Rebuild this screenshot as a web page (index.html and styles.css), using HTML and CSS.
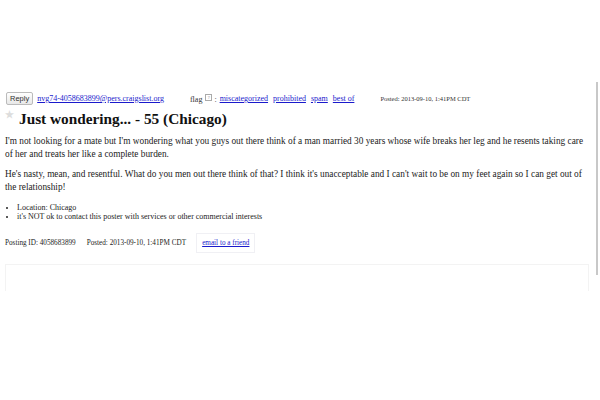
FILE: index.html
```html
<!DOCTYPE html>
<html>
<head>
<meta charset="utf-8">
<link rel="stylesheet" href="styles.css">
</head>
<body>
<div class="page">
  <div class="topbar">
    <span class="reply">Reply</span>
    <a class="email" href="#">nvg74-4058683899@pers.craigslist.org</a>
    <span class="flag">flag <span class="q">?</span> : </span>
    <a class="flink first" href="#">miscategorized</a>
    <a class="flink" href="#">prohibited</a>
    <a class="flink" href="#">spam</a>
    <a class="flink" href="#">best of</a>
    <span class="posted">Posted: 2013-09-10, 1:41PM CDT</span>
  </div>
  <h2 class="title"><span class="star">★</span>Just wondering... - 55 (Chicago)</h2>
  <div class="body">
    <p>I'm not looking for a mate but I'm wondering what you guys out there think of a man married 30 years whose wife breaks her leg and he resents taking care of her and treats her like a complete burden.</p>
    <p>He's nasty, mean, and resentful. What do you men out there think of that? I think it's unacceptable and I can't wait to be on my feet again so I can get out of the relationship!</p>
  </div>
  <ul class="notes">
    <li>Location: Chicago</li>
    <li>it's NOT ok to contact this poster with services or other commercial interests</li>
  </ul>
  <div class="footer">
    <span>Posting ID: 4058683899</span>
    <span class="fposted">Posted: 2013-09-10, 1:41PM CDT</span>
    <span class="friend"><a href="#">email to a friend</a></span>
  </div>
  <div class="box"></div>
</div>
<div class="scroll"></div>
</body>
</html>
```
FILE: styles.css
```css
html, body { margin: 0; padding: 0; background: #fff; }
body { font-family: "Liberation Serif", "Times New Roman", serif; color: #222; }
.page { padding: 92px 0 0 5px; width: 588px; }
.topbar { display: flex; align-items: center; font-size: 8px; height: 13px; }
.reply { font-family: "Liberation Sans", Arial, sans-serif; font-size: 7.5px; border: 1px solid #bbb; border-radius: 2px; background: linear-gradient(#fff, #e8e8e8); padding: 1px 3px; margin-left: 1px; color: #333; }
.email { margin-left: 4px; color: #1a1acc; }
.flag { margin-left: 26px; color: #333; }
.q { display: inline-block; font-size: 5px; border: 1px solid #aaa; width: 5px; height: 5px; line-height: 5px; text-align: center; vertical-align: 3px; color: #888; margin-left: 1px; }
.flink { color: #1a1acc; margin-left: 5px; }
.flink.first { margin-left: 3px; }
.posted { font-size: 6.5px; margin-left: 26px; color: #333; }
a { color: #1a1acc; }
.title { font-size: 15.3px; font-weight: bold; margin: 4px 0 0 0; color: #111; display: flex; align-items: center; line-height: 20px; }
.star { font-size: 10px; color: #ddd; margin-right: 5px; align-self: flex-start; line-height: 12px; }
.body { font-size: 9.3px; line-height: 13px; margin-top: 6px; color: #222; }
.body p { margin: 0 0 7px 0; }
.notes { font-size: 8px; line-height: 9px; margin: 9px 0 0 0; padding-left: 12px; color: #222; }
.footer { display: flex; align-items: center; font-size: 7.2px; margin-top: 12px; color: #222; }
.fposted { margin-left: 11px; }
.friend { margin-left: 10px; border: 1px solid #f0f0f4; padding: 5px 5px; }
.box { margin-top: 11px; height: 26px; border: 1px solid #f3f3f3; border-bottom: none; width: 582px; }
.scroll { position: absolute; left: 596px; top: 82px; width: 2px; height: 193px; background: #c8c8c8; }
```
